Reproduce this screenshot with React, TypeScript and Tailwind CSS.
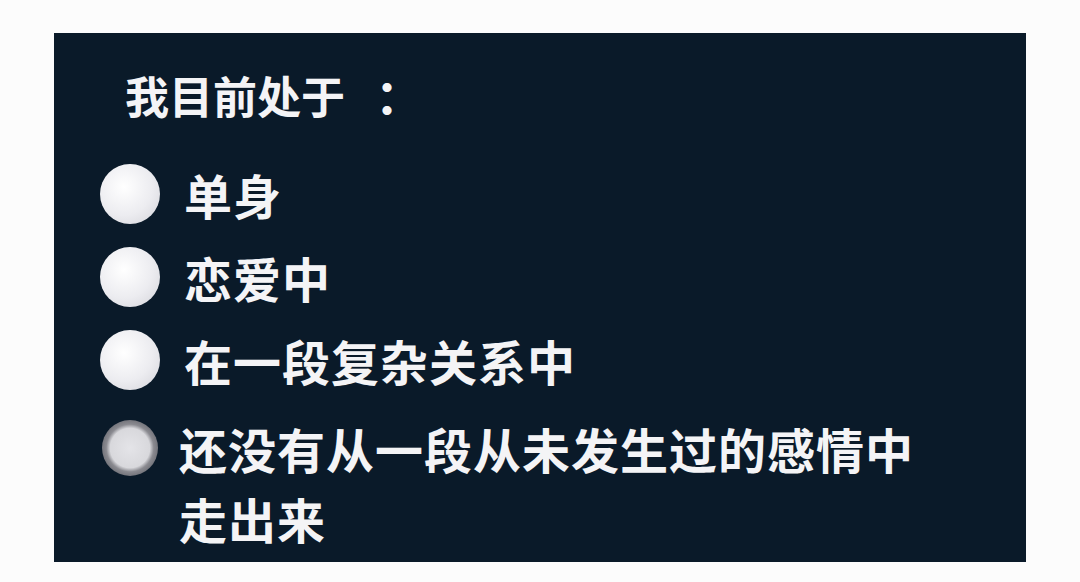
import React from 'react'

const options = ['单身', '恋爱中', '在一段复杂关系中']

function Radio({ selected = false }: { selected?: boolean }) {
  if (selected) {
    return (
      <div className="w-[56px] h-[56px] shrink-0 rounded-full bg-[radial-gradient(circle,#e4e4e8_0%,#d8d8dc_50%,#8a8a90_60%,#62636a_80%,#1f2a36_100%)]" />
    )
  }
  return (
    <div className="w-[60px] h-[60px] shrink-0 rounded-full bg-[radial-gradient(circle_at_40%_38%,#ffffff_0%,#ececf0_55%,#d2d2d8_100%)]" />
  )
}

export default function App() {
  return (
    <div className="min-h-[582px] w-full bg-[#fcfcfc] pt-[33px] font-['Noto_Sans_CJK_SC','Noto_Sans',sans-serif]">
      <div className="mx-auto w-[972px] h-[529px] bg-[#0a1a29] pt-[36px] pl-[46px]">
        <div className="pl-[25px] text-[44px] leading-[48px] font-bold text-[#f4f4f6]">
          我目前处于<span className="ml-[30px] text-[48px]">：</span>
        </div>
        <div className="mt-[45px] flex flex-col gap-[23px]">
          {options.map((o) => (
            <div key={o} className="flex items-center gap-[24px]">
              <Radio />
              <span className="text-[48px] leading-[60px] font-bold tracking-[1px] text-[#f4f4f6]">{o}</span>
            </div>
          ))}
          <div className="flex items-start gap-[21px]">
            <div className="mt-[7px] ml-[2px]">
              <Radio selected />
            </div>
            <span className="w-[760px] text-[48px] leading-[70px] font-bold tracking-[1px] text-[#f4f4f6]">
              还没有从一段从未发生过的感情中走出来
            </span>
          </div>
        </div>
      </div>
    </div>
  )
}
